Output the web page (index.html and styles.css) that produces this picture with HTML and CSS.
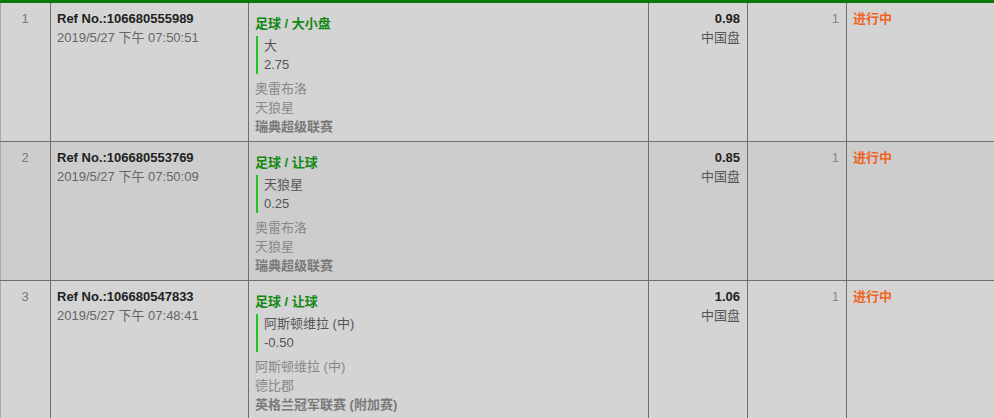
FILE: index.html
```html
<!DOCTYPE html>
<html lang="zh">
<head>
<meta charset="utf-8">
<link rel="stylesheet" href="styles.css">
</head>
<body>
<table class="bets">
  <colgroup>
    <col class="c-no"><col class="c-ref"><col class="c-sel"><col class="c-odds"><col class="c-stake"><col class="c-status">
  </colgroup>
  <tbody>
    <tr class="row">
      <td class="no">1</td>
      <td class="ref"><div class="refno">Ref No.:106680555989</div><div class="date">2019/5/27 下午 07:50:51</div></td>
      <td class="sel">
        <div class="title">足球 / 大小盘</div>
        <div class="pick"><div>大</div><div>2.75</div></div>
        <div class="team">奥雷布洛</div>
        <div class="team">天狼星</div>
        <div class="league">瑞典超级联赛</div>
      </td>
      <td class="odds"><div class="odd">0.98</div><div class="type">中国盘</div></td>
      <td class="stake">1</td>
      <td class="status">进行中</td>
    </tr>
    <tr class="row alt">
      <td class="no">2</td>
      <td class="ref"><div class="refno">Ref No.:106680553769</div><div class="date">2019/5/27 下午 07:50:09</div></td>
      <td class="sel">
        <div class="title">足球 / 让球</div>
        <div class="pick"><div>天狼星</div><div>0.25</div></div>
        <div class="team">奥雷布洛</div>
        <div class="team">天狼星</div>
        <div class="league">瑞典超级联赛</div>
      </td>
      <td class="odds"><div class="odd">0.85</div><div class="type">中国盘</div></td>
      <td class="stake">1</td>
      <td class="status">进行中</td>
    </tr>
    <tr class="row">
      <td class="no">3</td>
      <td class="ref"><div class="refno">Ref No.:106680547833</div><div class="date">2019/5/27 下午 07:48:41</div></td>
      <td class="sel">
        <div class="title">足球 / 让球</div>
        <div class="pick"><div>阿斯顿维拉 (中)</div><div>-0.50</div></div>
        <div class="team">阿斯顿维拉 (中)</div>
        <div class="team">德比郡</div>
        <div class="league">英格兰冠军联赛 (附加赛)</div>
      </td>
      <td class="odds"><div class="odd">1.06</div><div class="type">中国盘</div></td>
      <td class="stake">1</td>
      <td class="status">进行中</td>
    </tr>
  </tbody>
</table>
</body>
</html>
```
FILE: styles.css
```css
html, body {
  margin: 0;
  padding: 0;
  background: #d4d4d4;
}
body {
  font-family: "Liberation Sans", Arial, "Noto Sans CJK SC", sans-serif;
  font-size: 13px;
  line-height: 19px;
  color: #555;
  border-top: 3px solid #0b7a0b;
}
.bets {
  width: 994px;
  border-collapse: collapse;
  table-layout: fixed;
}
.c-no { width: 50px; }
.c-ref { width: 198px; }
.c-sel { width: 400px; }
.c-odds { width: 99px; }
.c-stake { width: 99px; }
.c-status { width: 148px; }
.row td {
  vertical-align: top;
  padding: 6px 7px 5px 6px;
  border: 1px solid #6e6e6e;
  border-top: none;
}
.row td:first-child { border-left: 1px solid #a8a8a8; }
.row td:last-child { border-right: none; }
.row { background: #d4d4d4; }
.row.alt { background: #cdcdcd; }
.no { text-align: center; color: #777; }
.refno { font-weight: bold; color: #222; }
.date { color: #666; }
.title {
  margin-top: 5px;
  font-weight: bold;
  color: #118811;
}
.pick {
  margin: 3px 0 5px 1px;
  padding-left: 6px;
  border-left: 2px solid #22c422;
  color: #555;
}
.team { color: #888; }
.league { font-weight: bold; color: #7a7a7a; }
.odds { text-align: right; }
.odd { font-weight: bold; color: #222; }
.type { color: #555; }
.stake { text-align: right; color: #888; }
.status { color: #ee6422; font-weight: bold; }
```
